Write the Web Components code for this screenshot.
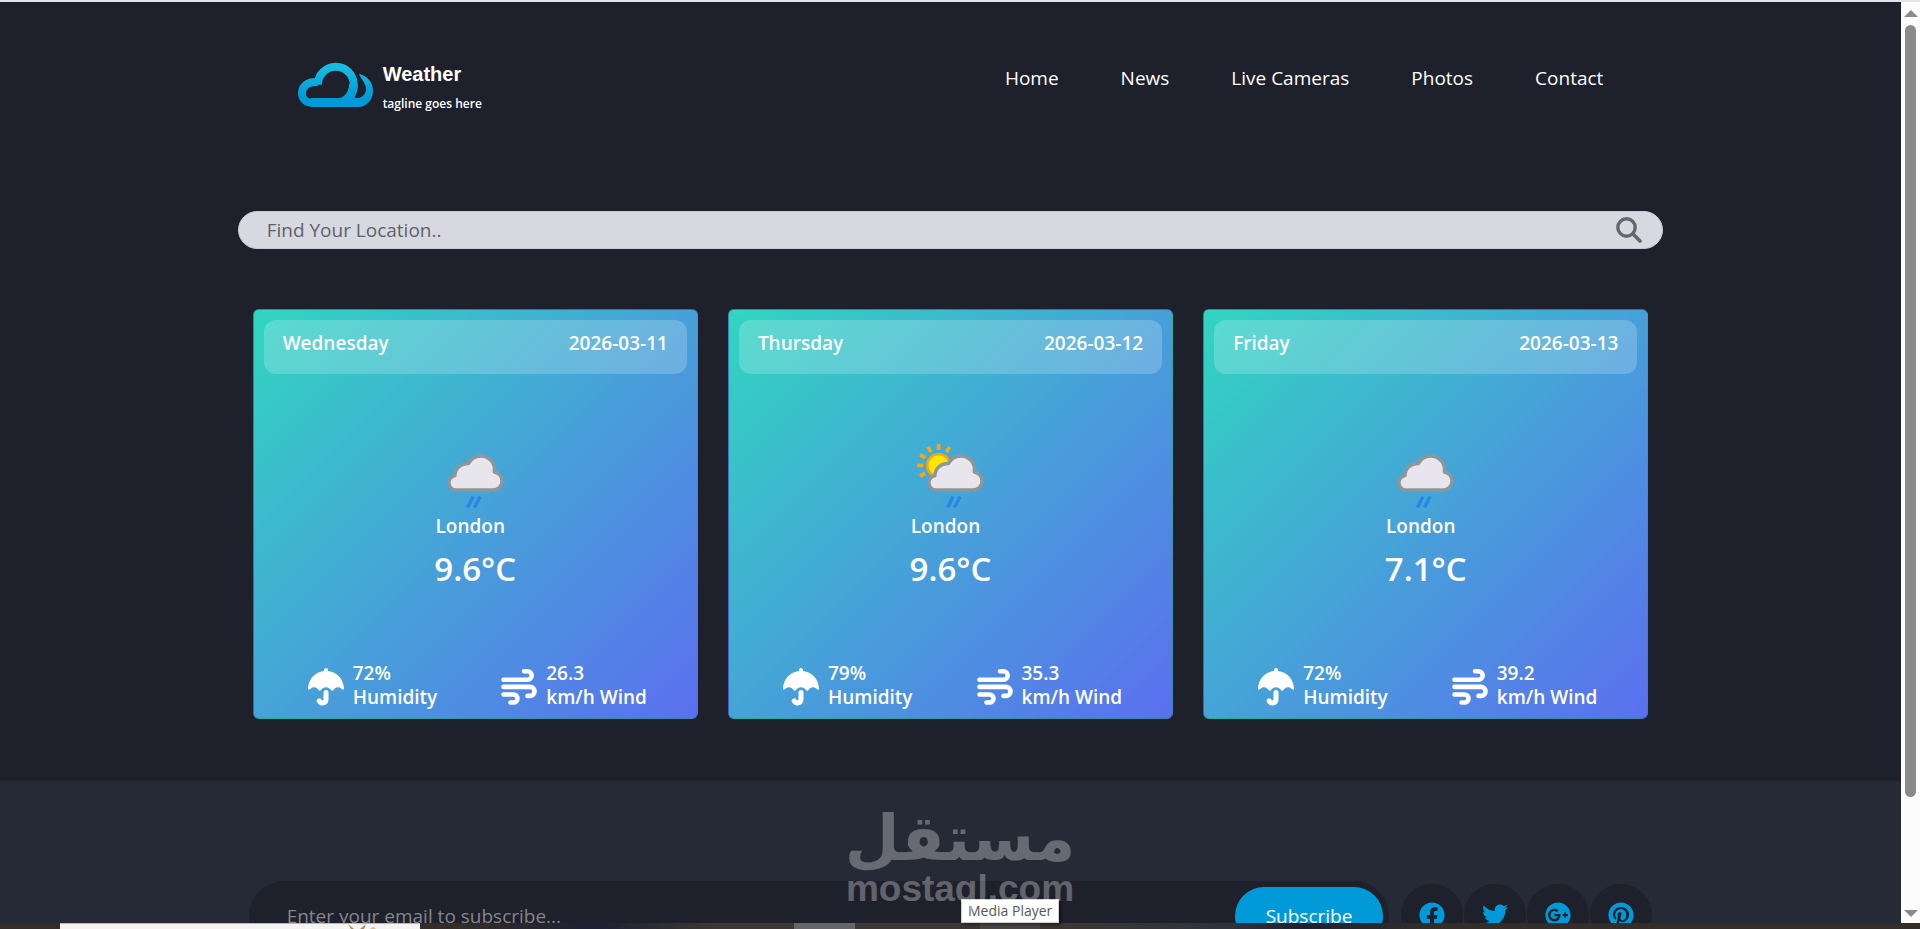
<!DOCTYPE html>
<html lang="en">
<head>
<meta charset="utf-8">
<title>Weather</title>
<style>
    html, body {
        height: 100%;
        margin: 0;
    }

    body {
        overflow: hidden;
        background: #1e202b;
        color: #fff;
        font: 19px/30px "Open Sans", "Noto Sans", sans-serif;
    }
</style>
</head>
<body>

<app-window>
    <site-header>
        <site-logo slot="brand" title="Weather" tagline="tagline goes here"></site-logo>
        <nav-link href="#home">Home</nav-link>
        <nav-link href="#news">News</nav-link>
        <nav-link href="#live">Live Cameras</nav-link>
        <nav-link href="#photos">Photos</nav-link>
        <nav-link href="#contact">Contact</nav-link>
    </site-header>

    <location-search></location-search>

    <forecast-list>
        <forecast-card day="Wednesday" date="2026-03-11" icon="rain" city="London" temp="9.6" humidity="72" wind="26.3"></forecast-card>
        <forecast-card day="Thursday" date="2026-03-12" icon="sun-rain" city="London" temp="9.6" humidity="79" wind="35.3"></forecast-card>
        <forecast-card day="Friday" date="2026-03-13" icon="rain" city="London" temp="7.1" humidity="72" wind="39.2"></forecast-card>
    </forecast-list>

    <site-footer>
        <social-link slot="social" name="facebook" href="#facebook"></social-link>
        <social-link slot="social" name="twitter" href="#twitter"></social-link>
        <social-link slot="social" name="google-plus" href="#google-plus"></social-link>
        <social-link slot="social" name="pinterest" href="#pinterest"></social-link>
    </site-footer>

    <scroll-bar slot="scrollbar"></scroll-bar>
    <task-bar slot="taskbar"></task-bar>
    <tool-tip slot="overlay">Media Player</tool-tip>
    <water-mark slot="overlay"></water-mark>
</app-window>

<script>
// small base class, every element renders its template once
class BaseElement extends HTMLElement {

    connectedCallback() {
        if (this.shadowRoot) return;
        const template = document.createElement('template');
        template.innerHTML = this.render();
        this.attachShadow({ mode: 'open' }).appendChild(template.content);
    }
}

class AppWindow extends BaseElement {

    render() {
        return `
        <style>
            :host {
                display: flex;
                flex-direction: column;
                position: relative;
                height: 100vh;
                box-sizing: border-box;
                border-top: 2px solid #e2e3e8;
                overflow: hidden;
            }

            .view {
                flex: 1;
                display: flex;
                min-height: 0;
            }

            main {
                flex: 1;
                min-width: 0;
                overflow: hidden;
            }
        </style>

        <div class="view">
            <main><slot></slot></main>
            <slot name="scrollbar"></slot>
        </div>
        <slot name="taskbar"></slot>
        <slot name="overlay"></slot>
        `;
    }
}

class SiteHeader extends BaseElement {

    render() {
        return `
        <style>
            :host {
                display: block;
                width: 75%;
                margin: 0 auto;
            }

            header {
                display: flex;
                justify-content: space-between;
                align-items: flex-start;
                padding: 60px 60px 0;
            }

            nav {
                display: flex;
                gap: 62px;
                padding-top: 1px;
            }
        </style>

        <header>
            <slot name="brand"></slot>
            <nav><slot></slot></nav>
        </header>
        `;
    }
}

class SiteLogo extends BaseElement {

    render() {
        return `
        <style>
            :host {
                display: block;
            }

            a {
                display: flex;
                gap: 10px;
                color: #fff;
                text-decoration: none;
            }

            svg {
                width: 75px;
                height: 45px;
            }

            .title {
                display: block;
                font: bold 20px/24px "Liberation Sans", Arial, sans-serif;
            }

            .tagline {
                display: block;
                margin-top: 8px;
                font-size: 12px;
                line-height: 20px;
                font-weight: 600;
            }
        </style>

        <a href="#home">
            <svg viewBox="0 0 75 45" aria-hidden="true">
                <defs>
                    <linearGradient id="sky" gradientUnits="userSpaceOnUse" x1="0" y1="0" x2="0" y2="45">
                        <stop offset="0.1" stop-color="#18bce0"/>
                        <stop offset="0.8" stop-color="#009ad8"/>
                    </linearGradient>
                </defs>
                <path d="M20.200 20.200C11 19 4 23.500 4 31c0 6 4.500 9.800 10 9.800H43C51 38 55.700 31 55.700 22.500A17.900 17.900 0 0 0 19.900 22.800" fill="none" stroke="url(#sky)" stroke-width="8"/>
                <path d="M61 12c8 1.500 14 8 14 16.500C75 38 68.500 45 60 45H13v-9h27c6 0 11-6 11-13.500h8.700c0 5-1 9.500-3.700 13.500h4.500c4.500-1 7.500-4.500 7.500-9 0-6-5-9.500-7-15z" fill="url(#sky)"/>
            </svg>
            <span>
                <span class="title">${this.getAttribute('title')}</span>
                <span class="tagline">${this.getAttribute('tagline')}</span>
            </span>
        </a>
        `;
    }
}

class NavLink extends BaseElement {

    render() {
        return `
        <style>
            :host {
                display: block;
            }

            a {
                color: #fff;
                text-decoration: none;
            }

            a:hover {
                color: #009ad8;
            }
        </style>

        <a href="${this.getAttribute('href')}"><slot></slot></a>
        `;
    }
}

class LocationSearch extends BaseElement {

    render() {
        return `
        <style>
            :host {
                display: block;
                width: 75%;
                margin: 97px auto 60px;
            }

            form {
                display: flex;
                align-items: center;
                height: 38px;
                box-sizing: border-box;
                padding: 0 20px 0 28px;
                border: 1px solid #c9c9d0;
                border-radius: 19px;
                background: #d8d8e1;
            }

            input {
                flex: 1;
                min-width: 0;
                padding: 0;
                border: 0;
                outline: 0;
                background: none;
                color: #33363d;
                font: inherit;
            }

            input::placeholder {
                color: #5e6369;
                opacity: 1;
            }

            button {
                display: flex;
                padding: 0;
                border: 0;
                background: none;
                color: #626870;
                cursor: pointer;
            }

            svg {
                width: 26px;
                height: 26px;
            }
        </style>

        <form onsubmit="return false">
            <input type="text" aria-label="Find Your Location" placeholder="Find Your Location..">
            <button aria-label="Search">
                <svg viewBox="0 0 26 26" fill="none" stroke="currentColor" aria-hidden="true">
                    <circle cx="10.500" cy="10.500" r="8.700" stroke-width="3.400"/>
                    <path d="M17 17l7 7" stroke-width="3.600" stroke-linecap="round"/>
                </svg>
            </button>
        </form>
        `;
    }
}

class ForecastList extends BaseElement {

    render() {
        return `
        <style>
            :host {
                display: grid;
                grid-template-columns: repeat(3, 1fr);
                gap: 30px;
                width: 75%;
                box-sizing: border-box;
                margin: 0 auto;
                padding: 0 15px 62px;
            }
        </style>

        <slot></slot>
        `;
    }
}

class ForecastCard extends BaseElement {

    cloud = `
        <path d="M19 46a7.300 7.300 0 0 1-1-14.500c0-7 6-12.500 13.500-12C34 14.500 38.500 12 43.500 12c8 0 14 6 14 13.500l-.2 2.500c5 1 7.700 4.500 7.700 9 0 5-4 9-9 9z" fill="#e8e6ec" stroke="#8f9699" stroke-width="3.400" stroke-linejoin="round"/>
        <path d="M30.500 63.500l5.500-11M37.500 63.500l5.500-11" stroke="#2389e3" stroke-width="3.400"/>`;

    sun = `
        <g transform="translate(21.700 21.500)">
            <circle r="11.500" fill="#ffe608" stroke="#efa51a" stroke-width="2.600"/>
            <g stroke="#efaa1c" stroke-width="3.800">
                <path d="M0-15.500v-6"/>
                <path d="M0-15.500v-6" transform="rotate(30)"/>
                <path d="M0-15.500v-6" transform="rotate(-30)"/>
                <path d="M0-15.500v-6" transform="rotate(-60)"/>
                <path d="M0-15.500v-6" transform="rotate(-90)"/>
                <path d="M0-15.500v-6" transform="rotate(-120)"/>
            </g>
        </g>`;

    render() {
        const sunny = this.getAttribute('icon') === 'sun-rain';

        return `
        <style>
            :host {
                display: flex;
                flex-direction: column;
                justify-content: space-between;
                min-height: 410px;
                box-sizing: border-box;
                padding: 10px 10px 9px;
                border: 1px solid rgba(0, 0, 0, 0.175);
                border-radius: 6px;
                background: linear-gradient(135deg, #31d5c1, #5b6fef);
                font-weight: 600;
            }

            header {
                display: flex;
                justify-content: space-between;
                padding: 8px 19px 16px;
                border-radius: 12px;
                background: rgba(255, 255, 255, 0.2);
            }

            .now {
                display: flex;
                flex-direction: column;
                align-items: center;
            }

            .now svg {
                width: 67px;
                height: 64px;
            }

            .city {
                margin-top: 3px;
                padding-right: 10px;
            }

            .temp {
                margin-top: 6px;
                font-size: 33px;
                line-height: 44px;
            }

            .stats {
                display: flex;
                justify-content: center;
                gap: 64px;
                padding-left: 4px;
                line-height: 24px;
            }

            .stat {
                display: flex;
                align-items: center;
                gap: 9px;
            }

            .stat svg {
                width: 36px;
                height: 38px;
                margin-top: 4px;
            }

            .stat span {
                display: block;
            }
        </style>

        <header>
            <span>${this.getAttribute('day')}</span>
            <time>${this.getAttribute('date')}</time>
        </header>

        <div class="now">
            <svg viewBox="${sunny ? 0 : 5} 0 67 64" overflow="visible" aria-hidden="true">
                ${sunny ? this.sun : ''}${this.cloud}
            </svg>
            <div class="city">${this.getAttribute('city')}</div>
            <div class="temp">${this.getAttribute('temp')}°C</div>
        </div>

        <div class="stats">
            <div class="stat">
                <svg viewBox="0 0 36 38" fill="#fff" aria-hidden="true">
                    <path d="M16 3V2a2 2 0 0 1 4 0v1c9 1 15.500 8 16 17.500.1 1.200-1 1.500-1.800.8-3.200-3-6.400-2.600-9 .9-.6.800-1.300.8-1.900 0-3-4-7.600-4-10.600 0-.6.800-1.300.8-1.900 0-2.600-3.500-5.800-3.900-9-.9-.8.7-1.900.4-1.800-.8C.5 11 7 4 16 3z"/>
                    <path d="M18 24.500v7a3.600 3.600 0 0 1-6.800 1.400" fill="none" stroke="#fff" stroke-width="5" stroke-linecap="round"/>
                </svg>
                <div><span>${this.getAttribute('humidity')}%</span><span>Humidity</span></div>
            </div>
            <div class="stat">
                <svg viewBox="0 -1 36 38" fill="none" stroke="#fff" stroke-width="4.600" stroke-linecap="round" aria-hidden="true">
                    <path d="M2.500 10.700H26.500a4.200 4.200 0 0 0 0-8.400H23"/>
                    <path d="M2.500 17.900H29a4.500 4.500 0 0 1 0 9H26.500"/>
                    <path d="M2.500 25.500H12.500a4 4 0 0 1 0 8H9.500"/>
                </svg>
                <div><span>${this.getAttribute('wind')}</span><span>km/h Wind</span></div>
            </div>
        </div>
        `;
    }
}

class SiteFooter extends BaseElement {

    render() {
        return `
        <style>
            :host {
                display: block;
                padding: 100px 0;
                background: #262936;
            }

            footer {
                display: flex;
                align-items: flex-start;
                gap: 12px;
                width: 75%;
                box-sizing: border-box;
                margin: 0 auto;
                padding: 0 11px;
            }

            form {
                flex: 1;
                display: flex;
                padding: 6px;
                border-radius: 36px;
                background: #1e202b;
            }

            input {
                flex: 1;
                min-width: 0;
                padding: 0 32px;
                border: 0;
                outline: 0;
                background: none;
                color: #fff;
                font: inherit;
            }

            input::placeholder {
                color: #85868a;
                opacity: 1;
            }

            button {
                padding: 14px 31px;
                border: 0;
                border-radius: 30px;
                background: #009ad8;
                color: #fff;
                font: inherit;
                cursor: pointer;
            }

            .social {
                display: flex;
                gap: 1px;
                padding-top: 3px;
            }
        </style>

        <footer>
            <form onsubmit="return false">
                <input type="email" aria-label="Email" placeholder="Enter your email to subscribe...">
                <button>Subscribe</button>
            </form>
            <div class="social"><slot name="social"></slot></div>
        </footer>
        `;
    }
}

class SocialLink extends BaseElement {

    icons = {
        'facebook': 'M504 256C504 119 393 8 256 8S8 119 8 256c0 123.780 90.690 226.380 209.250 245V327.690h-63V256h63v-54.640c0-62.150 37-96.480 93.670-96.480 27.140 0 55.520 4.840 55.520 4.840v61h-31.280c-30.800 0-40.410 19.120-40.410 38.730V256h68.780l-11 71.690h-57.780V501C413.310 482.380 504 379.780 504 256z',
        'twitter': 'M459.370 151.716c.325 4.548.325 9.097.325 13.645 0 138.720-105.583 298.558-298.558 298.558-59.452 0-114.680-17.219-161.137-47.106 8.447.974 16.568 1.299 25.340 1.299 49.055 0 94.213-16.568 130.274-44.832-46.132-.975-84.792-31.188-98.112-72.772 6.498.974 12.995 1.624 19.818 1.624 9.421 0 18.843-1.300 27.614-3.573-48.081-9.747-84.143-51.980-84.143-102.985v-1.299c13.969 7.797 30.214 12.670 47.431 13.319-28.264-18.843-46.781-51.005-46.781-87.391 0-19.492 5.197-37.360 14.294-52.954 51.655 63.675 129.300 105.258 216.365 109.807-1.624-7.797-2.599-15.918-2.599-24.040 0-57.828 46.782-104.934 104.934-104.934 30.213 0 57.502 12.670 76.670 33.137 23.715-4.548 46.456-13.320 66.599-25.340-7.798 24.366-24.366 44.833-46.132 57.827 21.117-2.273 41.584-8.122 60.426-16.243-14.292 20.791-32.161 39.308-52.628 54.253z',
        'google-plus': 'M256 8C119.100 8 8 119.100 8 256s111.100 248 248 248 248-111.100 248-248S392.900 8 256 8zm-70.700 372c-68.800 0-124-55.500-124-124s55.200-124 124-124c31.300 0 60.100 11 83 32.300l-33.600 32.600c-13.200-12.900-31.300-19.100-49.400-19.100-42.900 0-77.200 35.500-77.200 78.100s34.200 78.100 77.200 78.100c32.600 0 64.900-19.100 70.100-53.300h-70.100v-42.600h116.900c1.300 6.800 1.900 13.600 1.900 20.700 0 70.800-47.500 121.200-118.800 121.200zm230.200-106.200v35.500H380v-35.500h-35.500v-35.500H380v-35.500h35.500v35.500h35.200v35.500h-35.200z',
        'pinterest': 'M504 256c0 137-111 248-248 248-25.600 0-50.200-3.900-73.400-11.100 10.100-16.500 25.200-43.500 30.800-65 3-11.600 15.400-59 15.400-59 8.100 15.400 31.700 28.500 56.800 28.500 74.800 0 128.700-68.800 128.700-154.300 0-81.900-66.900-143.200-152.900-143.200-107 0-163.900 71.800-163.900 150.100 0 36.400 19.400 81.700 50.300 96.100 4.700 2.200 7.200 1.200 8.300-3.300.8-3.400 5-20.300 6.900-28.100.6-2.500.3-4.700-1.700-7.100-10.100-12.500-18.300-35.300-18.300-56.600 0-54.700 41.400-107.600 112-107.600 60.900 0 103.600 41.500 103.600 100.900 0 67.100-33.900 113.600-78 113.600-24.300 0-42.600-20.100-36.700-44.800 7-29.500 20.500-61.300 20.500-82.600 0-19-10.200-34.900-31.400-34.900-24.900 0-44.900 25.700-44.900 60.200 0 22 7.400 36.800 7.400 36.800s-24.500 103.800-29 123.200c-5 21.400-3 51.600-.9 71.200C73.400 450.900 8 361.100 8 256 8 119 119 8 256 8s248 111 248 248z'
    };

    render() {
        const name = this.getAttribute('name');

        return `
        <style>
            :host {
                display: block;
            }

            a {
                display: flex;
                align-items: center;
                justify-content: center;
                width: 62px;
                height: 62px;
                border-radius: 50%;
                background: #1e202b;
                color: #009ad8;
            }

            svg {
                width: 26px;
                height: 26px;
            }
        </style>

        <a href="${this.getAttribute('href')}" aria-label="${name}">
            <svg viewBox="0 0 512 512" fill="currentColor" aria-hidden="true"><path d="${this.icons[name]}"/></svg>
        </a>
        `;
    }
}

class ScrollBar extends BaseElement {

    render() {
        return `
        <style>
            :host {
                display: flex;
                flex-direction: column;
                align-items: center;
                justify-content: space-between;
                width: 19px;
                box-sizing: border-box;
                padding: 8px 0 6px;
                background: #fcfcfc;
            }

            svg {
                width: 14px;
                height: 7px;
            }

            .track {
                flex: 1;
                width: 11px;
                margin: 8px 0;
            }

            .thumb {
                height: 88%;
                border-radius: 6px;
                background: #8a8a8a;
            }
        </style>

        <svg viewBox="0 0 14 7" aria-hidden="true"><path d="M7 0l7 7H0z" fill="#8a8a8a"/></svg>
        <div class="track"><div class="thumb"></div></div>
        <svg viewBox="0 0 14 7" aria-hidden="true"><path d="M0 0h14L7 7z" fill="#8a8a8a"/></svg>
        `;
    }
}

class TaskBar extends BaseElement {

    render() {
        return `
        <style>
            :host {
                display: grid;
                grid-template-columns: 60px 360px 374px 61px 125px 60px 1fr;
                height: 6px;
                background: linear-gradient(90deg, #332e29 24%, #1c2034 31%, #3d3733 37%, #3d3733 55%, #30323c 64%, #1e2230 68%, #332e29 75%);
            }

            .preview {
                border-top: 1px solid #b9b9b9;
                background: #f4f3f2;
            }

            svg {
                display: block;
                width: 30px;
                height: 5px;
                margin-left: 288px;
            }

            .active {
                grid-column: 4;
                background: #67646a;
            }

            .hover {
                grid-column: 6;
                background: #4b4746;
            }
        </style>

        <div></div>
        <div class="preview">
            <svg viewBox="0 0 30 5" aria-hidden="true">
                <path d="M0 0l6 5h-3zM18 0l-6 5h4z" fill="#b98a45"/>
                <path d="M22 5q3-4 6 0z" fill="#e9bd85"/>
            </svg>
        </div>
        <div class="active"></div>
        <div class="hover"></div>
        `;
    }
}

class ToolTip extends BaseElement {

    render() {
        return `
        <style>
            :host {
                position: absolute;
                left: 50%;
                bottom: 6px;
                margin-left: 1px;
                padding: 0 6px;
                border: 1px solid #d0d0d0;
                background: #fff;
                color: #575757;
                font-size: 14px;
                line-height: 22px;
                box-shadow: 2px 2px 3px rgba(0, 0, 0, 0.4);
            }
        </style>

        <slot></slot>
        `;
    }
}

class WaterMark extends BaseElement {

    render() {
        return `
        <style>
            :host {
                position: absolute;
                left: 0;
                right: 0;
                bottom: 20px;
                text-align: center;
                font-weight: bold;
                color: #fff;
                opacity: 0.3;
                pointer-events: none;
            }

            div {
                font-family: "DejaVu Sans", sans-serif;
                font-size: 63px;
                line-height: 60px;
            }

            p {
                margin: 0;
                font-family: "Liberation Sans", Arial, sans-serif;
                font-size: 37px;
                line-height: 40px;
            }
        </style>

        <div lang="ar" dir="rtl">مستقل</div>
        <p>mostaql.com</p>
        `;
    }
}

customElements.define('app-window', AppWindow);
customElements.define('site-header', SiteHeader);
customElements.define('site-logo', SiteLogo);
customElements.define('nav-link', NavLink);
customElements.define('location-search', LocationSearch);
customElements.define('forecast-list', ForecastList);
customElements.define('forecast-card', ForecastCard);
customElements.define('site-footer', SiteFooter);
customElements.define('social-link', SocialLink);
customElements.define('scroll-bar', ScrollBar);
customElements.define('task-bar', TaskBar);
customElements.define('tool-tip', ToolTip);
customElements.define('water-mark', WaterMark);
</script>
</body>
</html>
